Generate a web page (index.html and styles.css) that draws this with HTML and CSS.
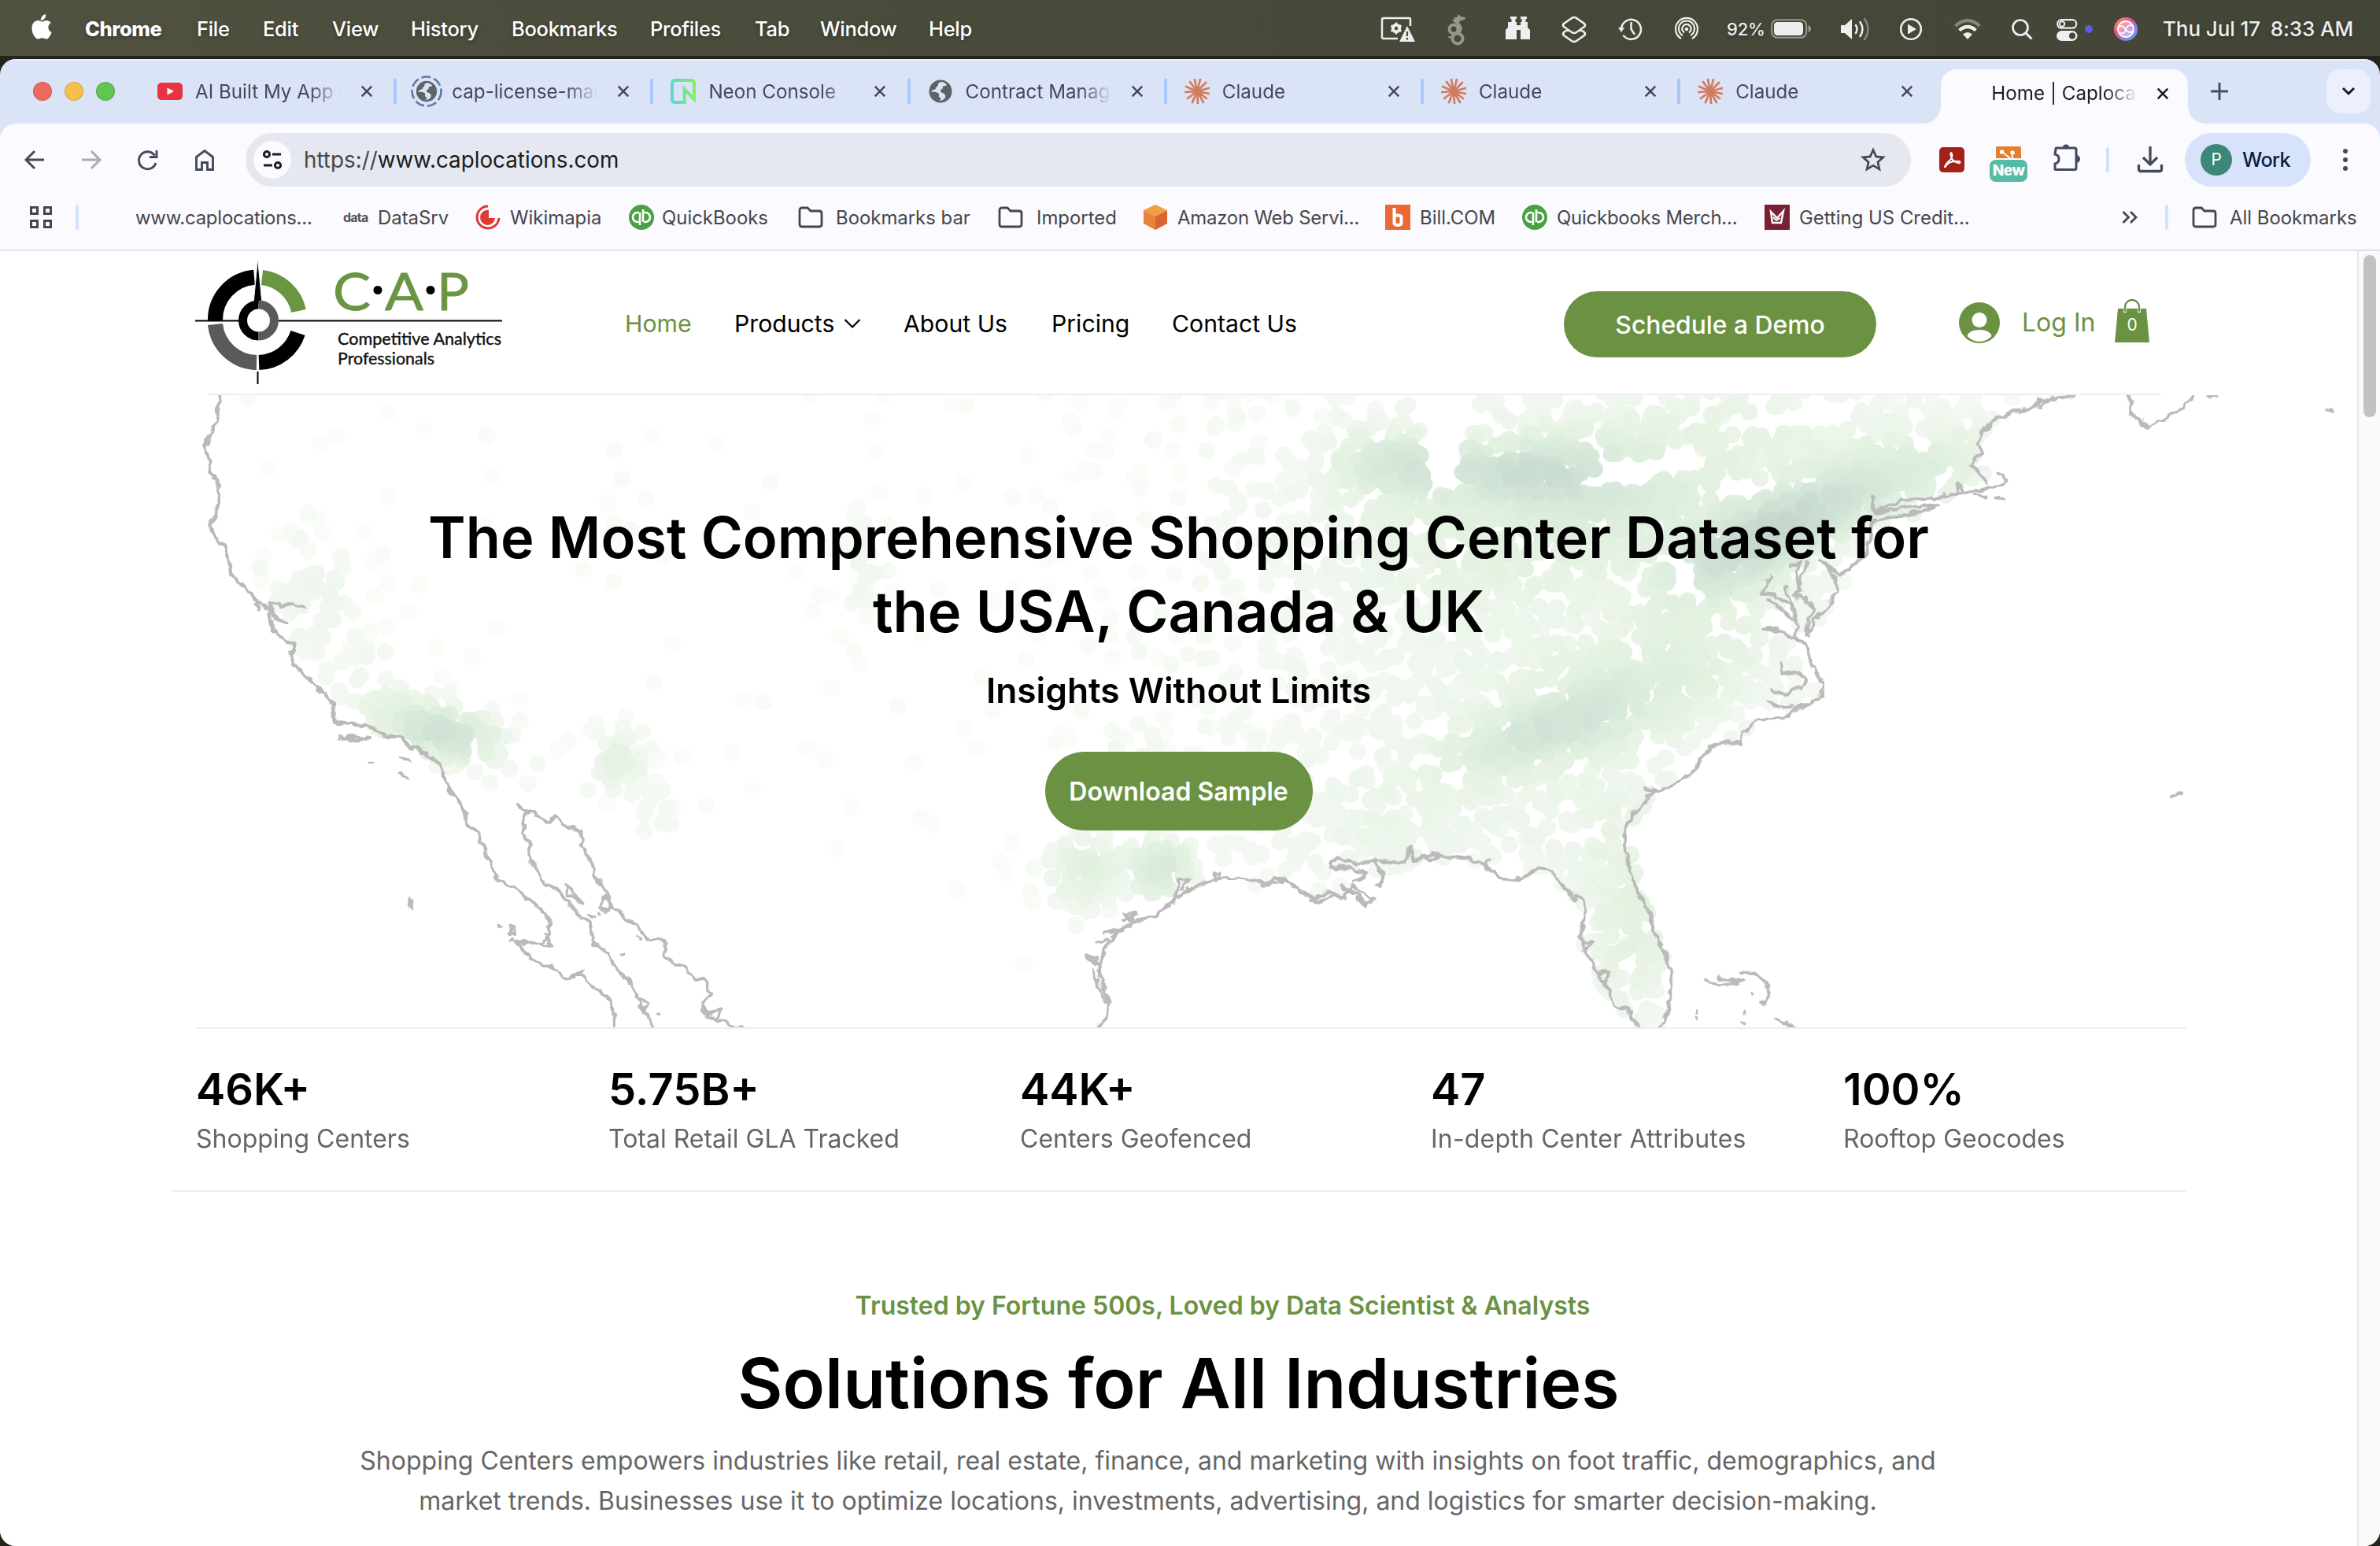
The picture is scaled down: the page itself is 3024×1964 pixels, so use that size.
FILE: index.html
```html
<!DOCTYPE html>
<html lang="en">
<head>
<meta charset="utf-8">
<title>Home | Caplocations</title>
<link rel="stylesheet" href="styles.css">
</head>
<body>
<svg class="defs" width="0" height="0">
  <symbol id="x" viewBox="0 0 20 20"><path d="M3 3L17 17M17 3L3 17" stroke="currentColor" stroke-width="2.8" fill="none"/></symbol>
  <symbol id="folder" viewBox="0 0 32 28"><path d="M2 5q0-3 3-3h7l4 4h11q3 0 3 3v14q0 3-3 3H5q-3 0-3-3z" fill="none" stroke="#45474b" stroke-width="2.8"/></symbol>
  <symbol id="burst" viewBox="-16 -16 32 32"><path d="M0 0L-3-15M0 0L4-15M0 0L11-11M0 0L15-4M0 0L15 3M0 0L12 9M0 0L8 14M0 0L1 15M0 0L-6 14M0 0L-12 9M0 0L-15 1M0 0L-14-6M0 0L-9-12" stroke="#d27b5d" stroke-width="2.7" stroke-linecap="round"/></symbol>
  <symbol id="globe" viewBox="0 0 32 32"><circle cx="16" cy="16" r="14.5" fill="#5e6368"/><path d="M17 4q-5 1-4 5-3 1-3 4-5 1-6 4 2-1 6 0 5 1 4 4-1 3 2 3 1 3-2 4 6 0 8-4 1-4-3-6-3 0-3-4 4-1 3-5 3 1 5-1-3-4-7-4z" fill="#dbe3f6"/></symbol>
  <symbol id="qb" viewBox="0 0 32 32"><circle cx="16" cy="16" r="16" fill="#4ba046"/><path d="M13 10h-2a6 6 0 0 0 0 12h1.500M14 10v16M19 22h2a6 6 0 0 0 0-12h-1.500M18 22V6" fill="none" stroke="#fff" stroke-width="2.600"/></symbol>
</svg>

<header class="menubar">
  <div class="menus">
    <svg class="apple" viewBox="0 0 26 32"><path d="M18 0q.5 4-2 6.300-2 2-4.300 1.700Q11.500 4.500 14 2.200 15.700.500 18 0zM13.400 9.600c1.300 0 2.900-1.700 5.500-1.700 2.700 0 4.700 1.400 5.800 3-5 3-4.100 10 .9 12C24 27.500 21.500 31.500 19 31.500c-2.200 0-2.700-1.300-5.300-1.300s-3.300 1.300-5.300 1.300C4.500 31.500.500 24 .500 18 .500 11.500 4.500 8 8.200 8c2.400 0 4 1.600 5.200 1.600z" fill="#fff"/></svg>
    <b>Chrome</b><span>File</span><span>Edit</span><span>View</span><span>History</span><span>Bookmarks</span><span>Profiles</span><span>Tab</span><span>Window</span><span>Help</span>
  </div>
  <div class="status">
    <svg viewBox="0 0 48 48"><path d="M25 36H7q-2 0-2-2V12q0-2 2-2h32q2 0 2 2v8" fill="none" stroke="#eee" stroke-width="2.500"/><circle cx="23" cy="23" r="4.500" fill="none" stroke="#eee" stroke-width="3.500"/><path d="M23 15.500v15M16.500 19.300l13 7.400M29.500 19.300l-13 7.400" stroke="#eee" stroke-width="2.500"/><circle cx="23" cy="23" r="2.200" fill="#474a3a"/><path d="M37 20L47 40H27z" fill="#eee"/><path d="M37 27v6m0 2v2.500" stroke="#474a3a" stroke-width="2.200"/></svg>
    <svg viewBox="0 0 48 48"><g fill="none" stroke="#96978d" stroke-width="4"><circle cx="19" cy="24" r="5.500"/><circle cx="24" cy="36" r="6.500"/><path d="M25 28q5-4 1-9-5-5 0-8" /></g><path d="M17 12l4-1-3-2 5 0 2-4 3 3 6 1-1 3-5 1-4 4-4-1zM11 34l6-2-2 4z" fill="#96978d"/></svg>
    <svg viewBox="0 0 48 48"><path d="M15 8h8v3h-1.500v4H23v4h5v-4h1.500v-4H28V8h8v3h-1.500v4H37v7l3 3v12H28V25h-5v12H9V25l3-3v-7h4.500v-4H15z" fill="#eee"/></svg>
    <svg viewBox="0 0 48 48"><path d="M24 9q2 0 3 1l10 7q2 2 0 4l-10 7q-3 2-6 0l-10-7q-2-2 0-4l10-7q1-1 3-1zM16 24.500L11 28q-2 2 0 4l10 7q3 2 6 0l10-7q2-2 0-4l-5-3.500" fill="none" stroke="#eee" stroke-width="2.600"/></svg>
    <svg viewBox="0 0 48 48"><path d="M13 24a12.500 12.500 0 1 1 3 8.500M25.500 16v8l4 6" fill="none" stroke="#eee" stroke-width="2.500" stroke-linecap="round"/><path d="M9 22h8l-4 6z" fill="#eee"/></svg>
    <svg viewBox="0 0 48 48"><g fill="none" stroke="#eee" stroke-width="2.200"><path d="M17 36a14 14 0 1 1 14 0M19 32a10 10 0 1 1 10 0M21 28.500a5.700 5.700 0 1 1 6 0"/></g><circle cx="24" cy="24" r="2.300" fill="#eee"/></svg>
    <span class="pct">92%</span>
    <svg class="battery" viewBox="0 0 52 26"><rect x="1.200" y="1.200" width="44" height="22.600" rx="7" fill="none" stroke="#98998f" stroke-width="2"/><rect x="4" y="4" width="37" height="17" rx="4.500" fill="#eee"/><path d="M47.500 8q3.500 1 3.500 4.500t-3.500 4.500z" fill="#98998f"/></svg>
    <svg class="vol" viewBox="0 0 40 32"><path d="M1 11h5l9-8v26l-9-8H1z" fill="#eee"/><g fill="none" stroke="#eee" stroke-width="2.500" stroke-linecap="round"><path d="M20 11q3 5 0 10M25.500 7q6 9 0 18"/><path d="M31 3q9 13 0 26" stroke="#85877b"/></g></svg>
    <svg viewBox="0 0 48 48"><circle cx="24" cy="24" r="12.800" fill="none" stroke="#eee" stroke-width="2.600"/><path d="M20 17.500L31 24l-11 6.500z" fill="#eee"/></svg>
    <svg viewBox="0 0 48 48"><g fill="none" stroke-width="4.200"><path d="M8.500 20q15.500-14 31 0" stroke="#84867a"/><path d="M13.500 25.500q10.500-9 21 0" stroke="#eee"/></g><path d="M18 30.500q6-5 12 0L24 37z" fill="#eee"/></svg>
    <svg viewBox="0 0 48 48"><circle cx="22" cy="22" r="9.500" fill="none" stroke="#eee" stroke-width="2.700"/><path d="M29 29l7.500 7.500" stroke="#eee" stroke-width="3"/></svg>
    <svg class="cc" viewBox="0 0 40 32"><rect x="8.200" y="4.200" width="24" height="10.500" rx="5.200" fill="none" stroke="#eee" stroke-width="2.200"/><circle cx="14" cy="9.500" r="3.200" fill="none" stroke="#eee" stroke-width="2"/><rect x="7" y="18" width="26.500" height="13" rx="6.500" fill="#eee"/><circle cx="27" cy="24.500" r="4" fill="#444738"/></svg>
    <i class="mic"></i>
    <svg viewBox="0 0 48 48"><defs><linearGradient id="sg" x1="0" y1="0" x2="1" y2="1"><stop offset="0" stop-color="#ff9d3c"/><stop offset=".4" stop-color="#e8508f"/><stop offset=".7" stop-color="#8c7cf2"/><stop offset="1" stop-color="#47c1f5"/></linearGradient></defs><circle cx="24" cy="24" r="15" fill="url(#sg)"/><circle cx="24" cy="24" r="10" fill="#ffffff66" stroke="#fff" stroke-width="1.800"/><path d="M14.500 22q4-5 9 2t10 2M15 28q8 4 9-4 3-7 9-4" fill="none" stroke="#fff" stroke-width="1.800"/></svg>
    <span class="clock">Thu Jul 17&ensp;8:33 AM</span>
  </div>
</header>

<main class="window">
  <div class="tabstrip">
    <div class="lights"><i></i><i></i><i></i></div>
    <div class="tab"><svg class="fav" viewBox="0 0 32 32"><rect y="5" width="32" height="22" rx="5" fill="#ea3340"/><path d="M12.500 11.500L21 16l-8.500 4.500z" fill="#fff"/></svg><span>AI Built My App i</span><svg class="close"><use href="#x"/></svg></div>
    <div class="tab wide"><svg class="fav spin" viewBox="0 0 40 40"><circle cx="20" cy="20" r="18.500" fill="none" stroke="#5f79a8" stroke-width="2.600" stroke-dasharray="12 4"/><svg x="5.500" y="5.500" width="29" height="29"><use href="#globe"/></svg></svg><span>cap-license-man</span><svg class="close"><use href="#x"/></svg></div>
    <div class="tab"><svg class="fav" viewBox="0 0 32 32"><defs><linearGradient id="ng"><stop offset="0" stop-color="#5fd9d0"/><stop offset="1" stop-color="#7df35f"/></linearGradient></defs><path d="M20 30H6q-4 0-4-4V6q0-4 4-4h20q4 0 4 4v20L17.500 13v17" fill="none" stroke="url(#ng)" stroke-width="4"/></svg><span>Neon Console</span><svg class="close"><use href="#x"/></svg></div>
    <div class="tab"><svg class="fav"><use href="#globe"/></svg><span>Contract Manage</span><svg class="close"><use href="#x"/></svg></div>
    <div class="tab"><svg class="fav"><use href="#burst"/></svg><span>Claude</span><svg class="close"><use href="#x"/></svg></div>
    <div class="tab"><svg class="fav"><use href="#burst"/></svg><span>Claude</span><svg class="close"><use href="#x"/></svg></div>
    <div class="tab last"><svg class="fav"><use href="#burst"/></svg><span>Claude</span><svg class="close"><use href="#x"/></svg></div>
    <div class="tab active"><span>Home | Caplocat</span><svg class="close"><use href="#x"/></svg></div>
    <svg class="plus" viewBox="0 0 22 22"><path d="M11 0v22M0 11h22" stroke="#45506a" stroke-width="3"/></svg>
    <div class="search-tabs"><svg width="18" height="12" viewBox="0 0 18 12"><path d="M2 2l7 7 7-7" fill="none" stroke="#1b1c20" stroke-width="3"/></svg></div>
  </div>

  <div class="toolbar">
    <div class="navs">
      <svg viewBox="0 0 32 32"><path d="M28 16H6M16 5L5 16l11 11" fill="none" stroke="#434a5c" stroke-width="2.900"/></svg>
      <svg viewBox="0 0 32 32"><path d="M4 16h22M16 5l11 11-11 11" fill="none" stroke="#a9abb1" stroke-width="2.900"/></svg>
      <svg viewBox="0 0 32 32"><path d="M26 20a11 11 0 1 1-1.500-9.500M27 4v8.500h-9" fill="none" stroke="#434a5c" stroke-width="2.900"/></svg>
      <svg viewBox="0 0 32 32"><path d="M5.500 28.500V12.500L16 4.500l10.500 8v16h-7v-9h-7v9z" fill="none" stroke="#434a5c" stroke-width="2.900"/></svg>
    </div>
    <div class="omnibox">
      <div class="site"><svg width="28" height="28" viewBox="0 0 28 28"><g fill="none" stroke="#1b1c20" stroke-width="3"><circle cx="7" cy="7" r="3.600"/><path d="M14 7h11M3 21h11"/><circle cx="21" cy="21" r="3.600"/></g></svg></div>
      <span class="url"><em>https://</em>www.caplocations.com</span>
      <svg class="star" viewBox="0 0 32 32"><path d="M16 3.500l3.700 8.400 9.100.9-6.900 6.100 2 9-7.900-4.700-7.900 4.700 2-9-6.900-6.100 9.100-.9z" fill="none" stroke="#45474b" stroke-width="2.700"/></svg>
    </div>
    <svg class="pdf" viewBox="0 0 32 32"><rect width="32" height="32" rx="5" fill="#a32117"/><path d="M7 25q1-4 8-10 3-6 0-8-2 2 2 9 6 5 9 4 2-3-6-2-6 0-10 4-3 4-3 3z" fill="none" stroke="#fff" stroke-width="2"/></svg>
    <div class="ext"><svg viewBox="0 0 32 15"><path d="M0 1.500Q0 0 1.500 0h29Q32 0 32 1.500V15H0z" fill="#e67e30"/><path d="M8 7l10 8M20.500 8l.5 7" stroke="#fff" stroke-width="2"/><circle cx="7.500" cy="7" r="2.700" fill="#fff"/><circle cx="21" cy="8" r="2.700" fill="#fff"/></svg><b>New</b></div>
    <svg class="puzzle" viewBox="0 0 34 34"><path d="M4 6q0-1 1-1h23q2 0 2 2v24q0 1.500-2 1.500H4q-1 0-1-1V25q5-1 5-6t-5-6z" fill="none" stroke="#434a5c" stroke-width="3"/><path d="M13 4.500a4 4 0 0 1 8 0zM30 14a5 5 0 0 1 0 10z" fill="#434a5c"/></svg>
    <i class="vsep"></i>
    <svg class="dl" viewBox="0 0 32 34"><path d="M16 0v23M7 14l9 9 9-9M1.500 23v6q0 2.500 2.500 2.500h24q2.500 0 2.500-2.500v-6" fill="none" stroke="#434a5c" stroke-width="3.300"/></svg>
    <div class="profile"><i>P</i>Work</div>
    <svg class="kebab" viewBox="0 0 8 30"><g fill="#434a5c"><circle cx="4" cy="4" r="3"/><circle cx="4" cy="15" r="3"/><circle cx="4" cy="26" r="3"/></g></svg>
  </div>

  <div class="bookmarks">
    <svg viewBox="0 0 32 32"><path d="M3.500 3.500h8v8h-8zM20.500 3.500h8v8h-8zM3.500 20.500h8v8h-8zM20.500 20.500h8v8h-8z" fill="none" stroke="#45474b" stroke-width="3"/></svg>
    <i class="vsep"></i>
    <span>www.caplocations...</span>
    <b class="datafav">data</b><span>DataSrv</span>
    <svg viewBox="0 0 32 32"><path d="M16 2A14 14 0 1 0 30 17" fill="none" stroke="#dc3a33" stroke-width="3"/><path d="M17 7a9.500 9.500 0 1 0 8 10h-8z" fill="#dc3a33"/></svg><span>Wikimapia</span>
    <svg><use href="#qb"/></svg><span>QuickBooks</span>
    <svg class="fold"><use href="#folder"/></svg><span>Bookmarks bar</span>
    <svg class="fold"><use href="#folder"/></svg><span>Imported</span>
    <svg viewBox="0 0 32 32"><path d="M16 0l15 7-15 8L1 7z" fill="#f0a043"/><path d="M1 7l15 8v17L1 24z" fill="#e8833a"/><path d="M31 7l-15 8v17l15-8z" fill="#d9642f"/></svg><span>Amazon Web Servi...</span>
    <svg viewBox="0 0 32 32"><path d="M0 0h32v32H0z" fill="#ec6733"/><path d="M11.500 4v21M11.500 15q0-1.500 4-1.500t5 1.500v8q0 3-4.500 3t-4.500-3z" fill="none" stroke="#fff" stroke-width="4"/></svg><span>Bill.COM</span>
    <svg><use href="#qb"/></svg><span>Quickbooks Merch...</span>
    <svg viewBox="0 0 32 32"><path d="M0 0h32v32H0z" fill="#7a2034"/><path d="M8 9l2 14h11l3-15-8 9z" fill="none" stroke="#fff" stroke-width="2.400"/><path d="M11 16l4 4 5-3" fill="none" stroke="#fff" stroke-width="2"/></svg><span>Getting US Credit...</span>
    <svg class="more" viewBox="0 0 20 16"><path d="M1.500 1l7 7-7 7M11 1l7 7-7 7" fill="none" stroke="#45474b" stroke-width="2.800"/></svg>
    <i class="vsep"></i>
    <svg class="fold"><use href="#folder"/></svg><span>All Bookmarks</span>
  </div>

  <div class="viewport">
    <div class="page">
      <nav class="sitenav">
        <svg class="logo" viewBox="0 0 420 180">
          <g fill="none" stroke-width="19">
            <path d="M33.500 87A54 54 0 0 1 83 32.300" stroke="#000"/>
            <path d="M93 32.500A54 54 0 0 1 139.500 75" stroke="#6a9541"/>
            <path d="M33.500 92A54 54 0 0 0 86 140.500" stroke="#5a5a5a"/>
            <path d="M89 140.500A54 54 0 0 0 138.500 103" stroke="#000"/>
          </g>
          <path d="M8 87.500H398M87.500 152V168" stroke="#000" stroke-width="2"/>
          <path d="M87.500 8L93 66H82z" fill="#000" stroke="#fff" stroke-width="1"/>
          <circle cx="88.500" cy="87" r="20" fill="#fff"/>
          <path d="M88.500 67a20 20 0 0 0 0 40" fill="none" stroke="#000" stroke-width="11"/>
          <path d="M88.500 67a20 20 0 0 1 0 40" fill="none" stroke="#5a5a5a" stroke-width="11"/>
          <g class="cap"><text x="183" y="74" textLength="48" lengthAdjust="spacingAndGlyphs">C</text><text x="249" y="74" textLength="49" lengthAdjust="spacingAndGlyphs">A</text><text x="315" y="74" textLength="41" lengthAdjust="spacingAndGlyphs">P</text></g>
          <circle cx="240" cy="48.500" r="5.500"/><circle cx="307" cy="48.500" r="5.500"/>
          <g class="tagline"><text x="189" y="118" textLength="208" lengthAdjust="spacingAndGlyphs">Competitive Analytics</text><text x="189" y="143" textLength="123" lengthAdjust="spacingAndGlyphs">Professionals</text></g>
        </svg>
        <div class="links"><a class="on">Home</a><a>Products</a><svg viewBox="0 0 22 14"><path d="M1.500 2l9.500 9.500L20.500 2" fill="none" stroke="#000" stroke-width="2.200"/></svg><a>About Us</a><a>Pricing</a><a>Contact Us</a></div>
        <a class="demo">Schedule a Demo</a>
        <svg class="user" viewBox="0 0 52 52"><circle cx="26" cy="26" r="26" fill="#6b9242"/><circle cx="26" cy="22.500" r="9.500" fill="#fff"/><path d="M10.500 43q2-8 15.500-8t15.500 8Q35 50 26 50t-15.500-7z" fill="#fff"/></svg>
        <a class="login">Log In</a>
        <svg class="bag" viewBox="0 0 44 56"><path d="M4 12h36l4 43H0z" fill="#6b9242"/><path d="M13 17V10a9 9 0 0 1 18 0v7" fill="none" stroke="#fff" stroke-width="4"/><path d="M13 16v-6a9 9 0 0 1 18 0v6" fill="none" stroke="#6b9242" stroke-width="2.400"/><text x="22" y="40" text-anchor="middle">0</text></svg>
      </nav>

      <section class="hero">
        <svg class="map" viewBox="0 0 2994 804">
          <defs><filter id="rough" color-interpolation-filters="sRGB" filterUnits="userSpaceOnUse" x="0" y="-20" width="2994" height="840"><feTurbulence type="fractalNoise" baseFrequency=".08" numOctaves="2" seed="4"/><feDisplacementMap in="SourceGraphic" scale="11" xChannelSelector="R" yChannelSelector="G"/></filter></defs>
          <g id="dots"></g>
          <g class="coast" filter="url(#rough)">
            <g transform="translate(200 -12) scale(.574 .529)">
              <path d="M137 15L133 75 125 100 115 115 103 150 113 170 117 205 128 220 138 260 133 300 115 335 120 355 150 385 158 420 163 455 200 490 222 520 250 543 255 580 265 600 285 613 300 615 305 632 292 645 300 668 340 712 370 740 388 765 390 800 400 810 465 815 500 838 545 848 560 868 590 880 625 910 640 955 665 1000 682 1025 680 1045 705 1075 725 1105 728 1130 743 1160 750 1185 800 1213 850 1260 870 1285 866 1320 850 1338 795 1337 838 1385 870 1395 905 1423 935 1413 965 1445 995 1467 1010 1490 1013 1550"/>
              <path d="M222 533L215 528 228 520M252 545L254 522 275 530 290 522 308 528 330 530M255 545L285 573 262 560M850 1340L875 1347 858 1320M925 1420L936 1405"/>
              <path d="M797 1010L820 1025 810 1045 810 1075 824 1105 826 1145 850 1185 890 1215 910 1245 930 1262 940 1285 958 1290 965 1340 995 1360 1010 1390 1035 1420 1055 1440 1065 1480 1085 1510 1102 1550"/>
              <path d="M797 1010L865 1047 878 1035 905 1058 940 1070 940 1105 962 1145 968 1175 1000 1225 1010 1250 1040 1280 1060 1295 1085 1327 1125 1333 1122 1370 1140 1388 1170 1397 1190 1425 1205 1425 1230 1460 1208 1480 1210 1505 1250 1525 1300 1550M1215 1505L1250 1500 1240 1520"/>
              <path d="M905 1200L920 1212 938 1243 908 1220zM990 1225L1005 1240 998 1262 980 1255zM403 845L430 853 470 847 440 842 418 850M538 890L558 902M538 928L553 942M466 907h10M556 1230L565 1240 562 1255zM778 1315L785 1293 790 1318zM1025 1410L1042 1436M1070 1475L1088 1480 1078 1500M757 1299h3M956 1272l8 4M975 1268h4M1065 1326h2M1028 1367h2M1108 1508h3M785 1332h4"/>
            </g>
            <g transform="translate(1100 -12) scale(.574 .529)">
              <path d="M512 1550L535 1510 537 1480 520 1420 518 1385 535 1345 565 1305 640 1270 670 1250 690 1230 730 1200 780 1187 830 1183 890 1199 930 1188 960 1210 1000 1238 1050 1225 1080 1205 1110 1225 1130 1235 1105 1248 1085 1220 1050 1203M1085 1195L1110 1170 1080 1162 1060 1155 1040 1160 1027 1150 1045 1133 1090 1150 1130 1138 1195 1145 1203 1105 1212 1140 1300 1130 1340 1135 1390 1165 1415 1190 1450 1185 1490 1157 1520 1165 1545 1205 1568 1235"/>
              <path d="M510 1375L490 1370 495 1380 518 1385M505 1400L515 1440 530 1480M510 1335L535 1332M530 1315L565 1305 545 1325M570 1285L600 1270 575 1265 590 1285M690 1230L690 1185 715 1188 700 1210M770 1187L772 1170 785 1168 778 1187M900 1195L905 1180 935 1190M1125 1145Q1155 1170 1135 1200M985 1235L1020 1218 1060 1225M1230 1138L1250 1122 1275 1132M1370 1150L1385 1143"/>
            </g>
            <g transform="translate(2000 -12) scale(.653 .529)">
              <path d="M-2 1230L12 1230 22 1245 22 1280 12 1325 22 1360 45 1405 60 1440 80 1490 105 1500 128 1550M165 1550L185 1490 190 1420 180 1375 152 1300 140 1250 115 1190 100 1120 98 1080 110 1040 145 985 190 960 235 925 245 895 270 865 300 853 323 858 330 830 365 800 418 795 430 778 480 750 483 715 465 680 450 620 425 605 400 590 368 583"/>
              <path d="M432 602L435 570 412 545 380 515M430 560L425 530 385 500 365 500 382 462M410 480L430 540M420 430L440 425 430 450 440 490 430 500 450 520M455 425L440 470M455 600L452 575 468 540 450 510 M455 600L470 560 500 520 512 490 505 460 480 420M485 425L515 455 535 440 570 400 580 330 590 320 650 310 712 288 685 288 620 298 590 305 580 270"/>
              <path d="M590 300L640 275 710 268 765 255 835 240 840 225 825 210M745 255L745 235 760 250M780 262L800 265M820 270L836 272M803 235L785 205 770 187 793 160 785 140 800 100 825 75 850 65 895 50 905 35 940 35 975 18M840 75L865 60M905 50L930 25M1075 18L1085 40 1083 65 1115 100 1150 75 1185 50 1208 18"/>
              <path d="M403 665L405 690 435 688 450 705 445 720M385 730L410 740 440 725M380 760L400 772 425 770M15 1330L35 1335 22 1355M50 1410L68 1408 60 1440M140 965L160 975M150 1265L155 1300"/>
              <path d="M258 1427L280 1440 330 1430 280 1422M325 1408L350 1412 382 1445 372 1488 362 1478M395 1520L440 1550M239 1500v3M239 1518v2M330 1500v4M330 1526v2M348 1458h2M1162 986L1180 978M1468 62h6M1235 22h14"/>
            </g>
          </g>
        </svg>
        <h1>The Most Comprehensive Shopping Center Dataset for<br>the USA, Canada &amp; UK</h1>
        <h3>Insights Without Limits</h3>
        <a class="download">Download Sample</a>
      </section>

      <section class="stats">
        <div><b>46K+</b><span>Shopping Centers</span></div>
        <div><b>5.75B+</b><span>Total Retail GLA Tracked</span></div>
        <div><b>44K+</b><span>Centers Geofenced</span></div>
        <div><b>47</b><span>In-depth Center Attributes</span></div>
        <div><b>100%</b><span>Rooftop Geocodes</span></div>
      </section>

      <section class="industries">
        <p class="kicker">Trusted by Fortune 500s, Loved by Data Scientist &amp; Analysts</p>
        <h2>Solutions for All Industries</h2>
        <p class="copy">Shopping Centers empowers industries like retail, real estate, finance, and marketing with insights on foot traffic, demographics, and<br>market trends. Businesses use it to optimize locations, investments, advertising, and logistics for smarter decision-making.</p>
      </section>
    </div>
    <div class="scrollbar"><i></i></div>
  </div>
</main>
<script src="map.js"></script>
</body>
</html>
```

FILE: styles.css
```css
* { box-sizing: border-box; }
body {
  margin: 0; width: 3024px; height: 1964px; overflow: hidden;
  display: flex; flex-direction: column;
  background: #24231c; font-family: Inter, "Liberation Sans", sans-serif; color: #000;
}
h1, h2, h3, p { margin: 0; }
svg { display: block; overflow: visible; }
.defs { position: absolute; }

/* menu bar */
.menubar {
  flex: 0 0 71px; margin-bottom: 4px; display: flex; align-items: center; padding: 2px 0 0 40px;
  background: linear-gradient(90deg, #50513f, #47493a 50%, #434637);
  color: #fff; font-size: 25.500px; font-weight: 500; white-space: nowrap;
  text-shadow: 0 2px 5px #0005;
}
.menus {
  flex: 0 0 1711px; display: grid; align-items: center;
  grid-template-columns: 68px 142px 84px 88px 100px 128px 176px 133px 83px 138px 1fr;
}
.menus b { font-weight: 800; letter-spacing: -.4px; }
.menus span { letter-spacing: -.3px; }
.apple { width: 26px; height: 32px; margin-top: -5px; }
.status {
  display: grid; align-items: center; color: #eee;
  grid-template-columns: 77px 76px 72px 71px 72px 75px 56px 88px 66px 72px 69px 61px 43px 28px 71px 250px;
}
.status svg { width: 48px; height: 48px; }
.status .battery { width: 52px; height: 26px; }
.status .vol { width: 40px; height: 32px; }
.status .cc { width: 40px; height: 32px; }
.pct { font-size: 22px; letter-spacing: -.2px; }
.mic { width: 10px; height: 10px; border-radius: 50%; background: #5e5ce6; }
.clock { font-size: 26px; letter-spacing: -.1px; }

/* browser window */
.window {
  flex: 1; display: flex; flex-direction: column; overflow: hidden;
  border-radius: 20px; background: #dbe3f6; color: #45474b;
}
.tabstrip { flex: 0 0 82px; display: flex; align-items: center; border-top: 2px solid #eaeefa; padding-bottom: 2px; }
.lights { flex: 0 0 178px; display: flex; gap: 16px; padding-left: 42px; }
.lights i { width: 24px; height: 24px; border-radius: 50%; background: #ed6a5e; border: 1px solid #0002; }
.lights i:nth-child(2) { background: #f5bf4f; }
.lights i:nth-child(3) { background: #61c554; }
.tab {
  flex: 0 0 326.200px; height: 32px; display: flex; align-items: center; padding-left: 22px;
  border-right: 4px solid #a8c7fa; font-size: 24.200px; color: #434a5c;
}
.tab.last { border-color: transparent; }
.fav { width: 32px; height: 32px; flex: none; }
.fav.spin { width: 40px; height: 40px; margin: 0 -4px 0 -4px; }
.tab span {
  flex: 0 0 200px; margin-left: 16px; white-space: nowrap;
  -webkit-mask-image: linear-gradient(90deg, #000 145px, transparent 186px);
}
.close { width: 18px; height: 18px; margin-left: 9px; flex: none; }
.tab.active {
  position: relative; align-self: flex-end; flex: 0 0 314px; height: 69px;
  margin: 0 0 -2px 5px; padding: 0 0 8px 64px;
  border: 0; border-radius: 20px 20px 0 0; background: #fafaff; color: #1b1c20;
}
.tab.active span { margin-left: 0; }
.tab.active .close { margin-left: 9px; }
.tab.active::before, .tab.active::after {
  content: ""; position: absolute; bottom: 0; width: 22px; height: 22px;
}
.tab.active::before { left: -22px; background: radial-gradient(circle at 0 0, transparent 21.500px, #fafaff 22px); }
.tab.active::after { right: -22px; background: radial-gradient(circle at 100% 0, transparent 21.500px, #fafaff 22px); }
.plus { width: 22px; height: 22px; margin-left: 29px; }
.search-tabs {
  width: 56px; height: 56px; margin: 0 12px 0 auto; border-radius: 18px; background: #eceffd;
  display: grid; place-items: center;
}

.toolbar {
  flex: 0 0 92px; display: flex; align-items: center; padding-bottom: 1px;
  background: #fafaff; border-radius: 20px 20px 0 0;
}
.navs { flex: 0 0 312px; display: flex; gap: 40px; padding-left: 28px; }
.navs svg { width: 32px; height: 32px; }
.omnibox {
  flex: 0 0 2116px; height: 68px; border-radius: 34px; background: #e5e8f1;
  display: flex; align-items: center; padding: 0 32px 0 10px;
}
.site { width: 48px; height: 48px; border-radius: 50%; background: #fafaff; display: grid; place-items: center; }
.url { margin: 0 auto 0 16px; font-size: 27.800px; color: #1b1c20; }
.url em { font-style: normal; color: #45474b; }
.star { width: 32px; height: 32px; }
.pdf { width: 32px; height: 32px; margin-left: 36px; flex: none; }
.ext { margin: 12px 0 0 32px; width: 48px; flex: none; display: flex; flex-direction: column; align-items: center; gap: 2px; }
.ext svg { width: 32px; height: 15px; }
.ext b {
  width: 48px; height: 28px; border-radius: 8px; background: #55bba6; color: #fff;
  font-size: 19px; line-height: 28px; text-align: center; font-weight: 800; letter-spacing: -.5px;
}
.puzzle { width: 34px; height: 34px; margin-left: 32px; margin-top: -5px; flex: none; }
.vsep { width: 4px; height: 32px; border-radius: 2px; background: #d3e1fa; }
.toolbar .vsep { margin-left: 34px; flex: none; }
.dl { width: 32px; height: 34px; margin-left: 36px; flex: none; }
.profile {
  flex: 0 0 160px; height: 68px; margin-left: 28px; padding-left: 20px; border-radius: 34px;
  background: #d7e3fb; color: #0a1d3f; display: flex; align-items: center; gap: 13px;
  font-size: 25.200px; font-weight: 500; letter-spacing: -.6px;
}
.profile i {
  width: 40px; height: 40px; border-radius: 50%; background: #3c8778; color: #fff;
  font-style: normal; font-weight: 400; font-size: 21px; text-align: center; line-height: 40px;
}
.kebab { width: 8px; height: 30px; margin-left: 40px; flex: none; }

.bookmarks {
  flex: 0 0 70px; display: grid; align-items: center; padding: 0 0 14px 36px;
  background: #fafaff; border-bottom: 2px solid #dde3ec; font-size: 23.900px; white-space: nowrap;
  grid-template-columns: 60px 76px 264px 44px 124px 44px 151px 42px 173px 48px 206px 49px 135px 44px 264px 44px 130px 44px 264px 44px 410px 55px 34px 48px 1fr;
}
.bookmarks svg { width: 32px; height: 32px; }
.bookmarks .fold { height: 28px; }
.bookmarks .more { width: 20px; height: 16px; }
.bookmarks span:nth-of-type(1), .bookmarks span:nth-of-type(7), .bookmarks span:nth-of-type(9) { letter-spacing: -.2px; }
.datafav { font-size: 16px; letter-spacing: -.8px; color: #555; }

/* page content */
.viewport { flex: 1; display: flex; background: #fff; color: #000; min-height: 0; }
.page { flex: 0 0 2994px; display: flex; flex-direction: column; }
.scrollbar { flex: 1; border-left: 2px solid #e8e8e8; background: #fafafa; padding: 5px 0 0 6px; }
.scrollbar i { display: block; width: 16px; height: 206px; border-radius: 8px; background: #c1c1c1; }

.sitenav { flex: 0 0 181px; display: flex; align-items: center; padding-left: 240px; }
.logo { flex: 0 0 420px; height: 180px; }
.cap { font: 66px Lato, sans-serif; fill: #6a9541; stroke: #6a9541; stroke-width: .8px; }
.tagline { font: 400 21.500px Lato, sans-serif; fill: #111; stroke: #111; stroke-width: .4px; }
.links {
  flex: 0 0 1327px; padding: 3px 0 0 134px; display: grid; align-items: center; font-size: 30.200px; white-space: nowrap;
  grid-template-columns: 139px 139px 76px 188px 153px 1fr;
}
.links svg { width: 22px; height: 14px; }
.links .on, .login { color: #6b9242; }
.demo, .download { background: #6b9242; color: #fff; display: grid; place-items: center; }
.demo { flex: 0 0 397px; height: 84px; border-radius: 42px; font-size: 31.800px; font-weight: 500; margin-top: 5px; }
.user { width: 52px; height: 52px; margin-left: 105px; }
.login { font-size: 32px; width: 91px; margin-left: 28px; white-space: nowrap; }
.bag { width: 44px; height: 56px; margin: -4px 0 0 27px; }
.bag text { font-size: 21px; fill: #fff; }

.hero {
  position: relative; flex: 0 0 806px; display: flex; flex-direction: column; align-items: center;
  padding-top: 136px;
}
.hero::before { content: ""; position: absolute; top: 0; left: 264px; width: 2482px; height: 2px; background: #eee; }
.map { position: absolute; top: 2px; left: 0; width: 2994px; height: 804px; overflow: hidden; }
.coast path { fill: none; stroke: #bababa; stroke-width: 4.300px; stroke-linejoin: round; stroke-linecap: round; vector-effect: non-scaling-stroke; }
h1, h3, .download { position: relative; }
h1 { font-size: 72.200px; line-height: 94px; font-weight: 600; text-align: center; }
h3 { font-size: 44.300px; line-height: 58px; font-weight: 600; margin-top: 24px; }
.download { width: 340px; height: 100px; border-radius: 50px; margin-top: 49px; font-size: 32px; font-weight: 600; }

.stats {
  flex: 0 0 209px; margin: -1px 217px 0; padding: 39px 0 0 32px; width: 2561px;
  display: grid; grid-template-columns: 524px 523px 522px 524px 1fr; align-content: start;
  border-bottom: 2px solid #eee; position: relative;
}
.stats::before { content: ""; position: absolute; top: 0; left: 32px; right: 0; height: 2px; background: #eee; }
.stats b { display: block; font-size: 56px; line-height: 80px; font-weight: 600; }
.stats span { display: block; font-size: 32px; line-height: 46px; color: #666; }
.stats div:nth-child(4) span { letter-spacing: .2px; }

.industries { text-align: center; padding-top: 121px; }
.kicker { font-size: 32px; line-height: 48px; font-weight: 600; color: #6b9242; padding-left: 112px; }
.industries h2 { font-size: 88px; line-height: 114px; font-weight: 600; margin-top: 17px; }
.copy { font-size: 32px; line-height: 51.200px; color: #666; margin-top: 16px; padding-right: 78px; white-space: nowrap; }
```

FILE: map.js
```js
// Shopping centre density: dots scattered over land, tinted by local density.
const land = [[279,495],[262,570],[275,627],[268,668],[291,712],[335,768],[352,790],[372,820],[376,845],[416,880],[428,915],[467,920],[510,938],[555,975],[575,1005],[660,1020],[800,1060],[1000,1075],[1200,1120],[1300,1290],[1380,1280],[1400,1190],[1420,1160],[1500,1125],[1620,1125],[1680,1140],[1800,1092],[1900,1095],[1960,1105],[2005,1140],[2008,1200],[2030,1250],[2060,1290],[2105,1310],[2122,1240],[2090,1150],[2066,1060],[2098,1010],[2165,965],[2210,940],[2240,905],[2305,885],[2312,870],[2290,815],[2335,755],[2375,680],[2460,640],[2545,612],[2510,590],[2512,565],[2535,530],[2620,495]];
const lakes = [
  [[1802,490],[1804,560],[1812,622],[1840,622],[1864,590],[1858,550],[1866,490]],
  [[1998,612],[2040,590],[2140,566],[2148,598],[2060,620],[2010,626]],
  [[2155,544],[2240,520],[2300,508],[2340,518],[2335,548],[2200,552]],
  [[2155,630],[2190,604],[2245,608],[2255,630],[2190,640]],
  [[2110,700],[2135,690],[2160,735],[2135,760]],
  [[2070,722],[2090,715],[2090,750],[2070,745]],
];
// x, y, spread x, spread y, weight, rotation in degrees
const hubs = [
  [560,930,58,24,1.0,14],[395,765,42,55,.3,0],[470,865,36,50,.18,40],[785,965,26,28,.5,0],[835,1040,22,28,.2,0],[790,660,20,45,.12,0],
  [1095,715,22,45,.22,0],[1430,985,45,28,.3,0],[1475,1105,30,26,.8,0],[1375,1105,32,36,.55,0],[1700,1060,90,50,.14,0],
  [1765,590,50,30,.5,0],[1935,598,105,28,.7,0],[1850,690,130,50,.22,0],[2060,650,110,45,.35,0],
  [2280,660,85,30,.9,-22],[2190,725,60,32,.45,-20],[1960,930,90,24,.5,-18],[2080,870,130,48,.36,-22],
  [2075,1190,50,110,.42,0],[2000,800,270,220,.27,0],[2450,600,80,35,.4,-15],[2230,550,200,60,.3,0],[1650,720,200,260,.06,0],[1900,1050,150,70,.12,0],
];
const ramp = [[0,[251,253,250]],[.12,[246,250,244]],[.3,[239,247,238]],[.5,[230,243,227]],[.75,[220,237,221]],[1,[209,228,215]],[1.45,[190,207,197]]];

let seed = 20250717;
const rnd = () => ((seed = (seed * 1664525 + 1013904223) >>> 0) / 4294967296);

function inside(x, y, poly) {
  let hit = false;
  for (let i = 0, j = poly.length - 1; i < poly.length; j = i++) {
    const [ax, ay] = poly[i], [bx, by] = poly[j];
    if ((ay > y) !== (by > y) && x < (bx - ax) * (y - ay) / (by - ay) + ax) hit = !hit;
  }
  return hit;
}
function density(x, y) {
  let d = .012;
  for (const [cx, cy, sx, sy, w, r] of hubs) {
    const a = r * Math.PI / 180, dx = x - cx, dy = y - cy;
    const u = (dx * Math.cos(a) + dy * Math.sin(a)) / sx, v = (dy * Math.cos(a) - dx * Math.sin(a)) / sy;
    d += w * Math.exp(-(u * u + v * v) / 2);
  }
  return d;
}
function tint(d) {
  let k = 1;
  while (k < ramp.length - 1 && ramp[k][0] < d) k++;
  const [a, ca] = ramp[k - 1], [b, cb] = ramp[k];
  const t = Math.max(0, Math.min(1, (d - a) / (b - a)));
  return `rgb(${ca.map((c, i) => Math.round(c + (cb[i] - c) * t))})`;
}

const points = [];
for (let i = 0; i < 24000; i++) {
  const x = 260 + rnd() * 2360, y = 495 + rnd() * 815;
  if (!inside(x, y, land) || lakes.some(l => inside(x, y, l))) continue;
  const d = density(x, y);
  if (rnd() < d * (d < .15 ? .8 : 1.15)) points.push([x, y, d + (rnd() - .5) * .12]);
}
points.sort((a, b) => a[2] - b[2]);
document.getElementById('dots').innerHTML = points
  .map(([x, y, d]) => `<circle cx="${x.toFixed(1)}" cy="${(y - 502).toFixed(1)}" r="11" fill="${tint(d)}"/>`)
  .join('');
```
